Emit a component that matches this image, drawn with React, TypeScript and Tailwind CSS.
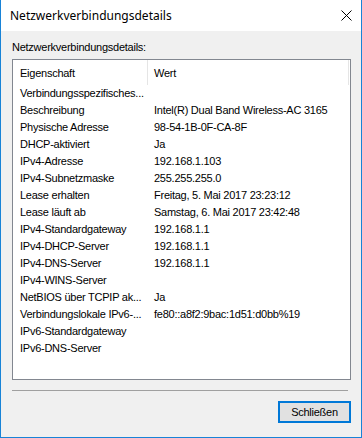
import React from "react";

const rows: [string, string][] = [
  ["Verbindungsspezifisches...", ""],
  ["Beschreibung", "Intel(R) Dual Band Wireless-AC 3165"],
  ["Physische Adresse", "98-54-1B-0F-CA-8F"],
  ["DHCP-aktiviert", "Ja"],
  ["IPv4-Adresse", "192.168.1.103"],
  ["IPv4-Subnetzmaske", "255.255.255.0"],
  ["Lease erhalten", "Freitag, 5. Mai 2017 23:23:12"],
  ["Lease läuft ab", "Samstag, 6. Mai 2017 23:42:48"],
  ["IPv4-Standardgateway", "192.168.1.1"],
  ["IPv4-DHCP-Server", "192.168.1.1"],
  ["IPv4-DNS-Server", "192.168.1.1"],
  ["IPv4-WINS-Server", ""],
  ["NetBIOS über TCPIP ak...", "Ja"],
  ["Verbindungslokale IPv6-...", "fe80::a8f2:9bac:1d51:d0bb%19"],
  ["IPv6-Standardgateway", ""],
  ["IPv6-DNS-Server", ""],
];

export default function App() {
  return (
    <div className="flex h-[438px] w-[362px] flex-col border-x border-b border-[#1883d7] bg-[#f0f0f0] font-['Liberation_Sans',Arial,sans-serif] text-[11px] tracking-[-0.25px] text-black">
      {/* title bar */}
      <div className="flex h-[31px] items-center justify-between bg-white pl-[9px] pr-[9px]">
        <span className="font-['Noto_Sans',sans-serif] text-[12px] tracking-normal">
          Netzwerkverbindungsdetails
        </span>
        <svg width="11" height="11" viewBox="0 0 11 11" className="mt-[-1px]">
          <path d="M0.5 0.5 L10.5 10.5 M10.5 0.5 L0.5 10.5" stroke="#000" strokeWidth="1" />
        </svg>
      </div>

      {/* body */}
      <div className="flex flex-1 flex-col pl-[11px] pr-[10px] pt-[10px]">
        <div className="h-[13px] leading-[13px]">Netzwerkverbindungsdetails:</div>

        <div className="mt-[5px] h-[321px] w-[339px] border border-[#828790] bg-white">
          <div className="flex h-[25px] items-center leading-[13px]">
            <div className="flex h-full w-[135px] items-center border-r border-[#e5e5e5] pl-[7px] pt-[1px]">
              Eigenschaft
            </div>
            <div className="flex h-full w-[201px] items-center border-r border-[#e5e5e5] pl-[6px] pt-[1px]">
              Wert
            </div>
          </div>
          {rows.map(([k, v]) => (
            <div key={k} className="flex h-[17px] items-center leading-[13px]">
              <div className="w-[141px] overflow-hidden whitespace-nowrap pl-[7px]">{k}</div>
              <div className="flex-1 whitespace-nowrap">{v}</div>
            </div>
          ))}
        </div>

        <div className="mt-[10px] h-px w-[336px] bg-[#a0a0a0]" />

        <div className="mt-[10px] flex justify-end">
          <button className="h-[22px] w-[73px] border-2 border-[#0078d7] bg-[#e1e1e1] leading-[13px]">
            Schließen
          </button>
        </div>
      </div>
    </div>
  );
}
